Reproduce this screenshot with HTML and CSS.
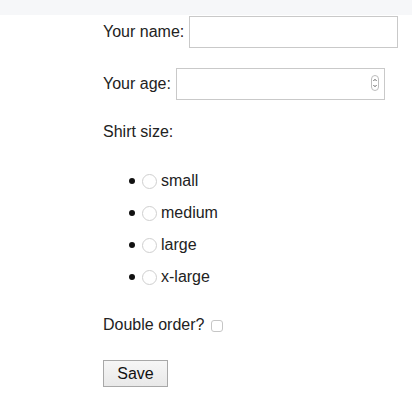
FILE: index.html
```html
<!DOCTYPE html>
<html lang="en">
<head>
<meta charset="utf-8">
<title>Order form</title>
<link rel="stylesheet" href="styles.css">
</head>
<body>
<div class="topbar"></div>
<form class="form">
  <div class="row row-name">
    <label for="name">Your name:</label>
    <input id="name" class="text" type="text">
  </div>
  <div class="row row-age">
    <label for="age">Your age:</label>
    <span class="num-wrap">
      <input id="age" class="text num" type="number">
      <svg class="spin" width="8" height="16" viewBox="0 0 8 16" aria-hidden="true">
        <rect x="0.5" y="0.5" width="7" height="15" rx="3.5" fill="#fff" stroke="#bdbdbd"/>
        <path d="M2.4 6 L4 4.3 L5.6 6" fill="none" stroke="#555" stroke-width="0.9"/>
        <path d="M2.4 10 L4 11.7 L5.6 10" fill="none" stroke="#555" stroke-width="0.9"/>
      </svg>
    </span>
  </div>
  <div class="row row-shirt">Shirt size:</div>
  <ul class="sizes">
    <li><input type="radio" name="size" id="s1" class="radio"><label for="s1">small</label></li>
    <li><input type="radio" name="size" id="s2" class="radio"><label for="s2">medium</label></li>
    <li><input type="radio" name="size" id="s3" class="radio"><label for="s3">large</label></li>
    <li><input type="radio" name="size" id="s4" class="radio"><label for="s4">x-large</label></li>
  </ul>
  <div class="row row-double">
    <label for="dbl">Double order?</label>
    <input id="dbl" type="checkbox" class="check">
  </div>
  <button type="button" class="save">Save</button>
</form>
</body>
</html>
```

FILE: styles.css
```css
html, body {
  margin: 0;
  padding: 0;
  background: #fff;
}
body {
  font-family: "Liberation Sans", Arial, sans-serif;
  font-size: 16px;
  color: #222;
}
.topbar {
  height: 15px;
  background: #f6f7f9;
}
.form {
  display: flex;
  flex-direction: column;
  align-items: flex-start;
  padding-left: 103px;
}
.row {
  display: flex;
  align-items: center;
  height: 32px;
  gap: 5px;
}
.row-name { margin-top: 1px; }
.row-age { margin-top: 20px; }
.row-shirt { margin-top: 16px; }
.row-double { margin-top: 16px; gap: 7px; }
.text {
  box-sizing: border-box;
  width: 209px;
  height: 32px;
  margin: 0;
  padding: 2px 6px;
  border: 1px solid #c9c9c9;
  border-radius: 0;
  font: inherit;
  color: #222;
  background: #fff;
  outline: none;
}
.num-wrap {
  position: relative;
  display: block;
  height: 32px;
}
.num {
  -moz-appearance: textfield;
}
.num::-webkit-inner-spin-button,
.num::-webkit-outer-spin-button {
  -webkit-appearance: none;
  margin: 0;
}
.spin {
  position: absolute;
  right: 6px;
  top: 7px;
}
.sizes {
  list-style: none;
  margin: 17px 0 0 0;
  padding: 0 0 0 26px;
}
.sizes li {
  display: flex;
  align-items: center;
  height: 32px;
}
.sizes li::before {
  content: "";
  width: 6px;
  height: 6px;
  border-radius: 50%;
  background: #111;
  margin-right: 7px;
}
.radio {
  -webkit-appearance: none;
  appearance: none;
  box-sizing: border-box;
  width: 15px;
  height: 15px;
  margin: 0 4px 0 0;
  border: 1px solid #cfcfcf;
  border-radius: 50%;
  background: #fff;
}
.check {
  -webkit-appearance: none;
  appearance: none;
  box-sizing: border-box;
  width: 12px;
  height: 12px;
  margin: 1px 0 0 0;
  border: 1px solid #c6c6c6;
  border-radius: 3px;
  background: #fff;
}
.save {
  box-sizing: border-box;
  margin-top: 19px;
  width: 65px;
  height: 27px;
  padding: 0;
  font: inherit;
  color: #111;
  border: 1px solid #a8a8a8;
  border-radius: 0;
  background: linear-gradient(#f6f6f6, #e9e9e9);
}
```
